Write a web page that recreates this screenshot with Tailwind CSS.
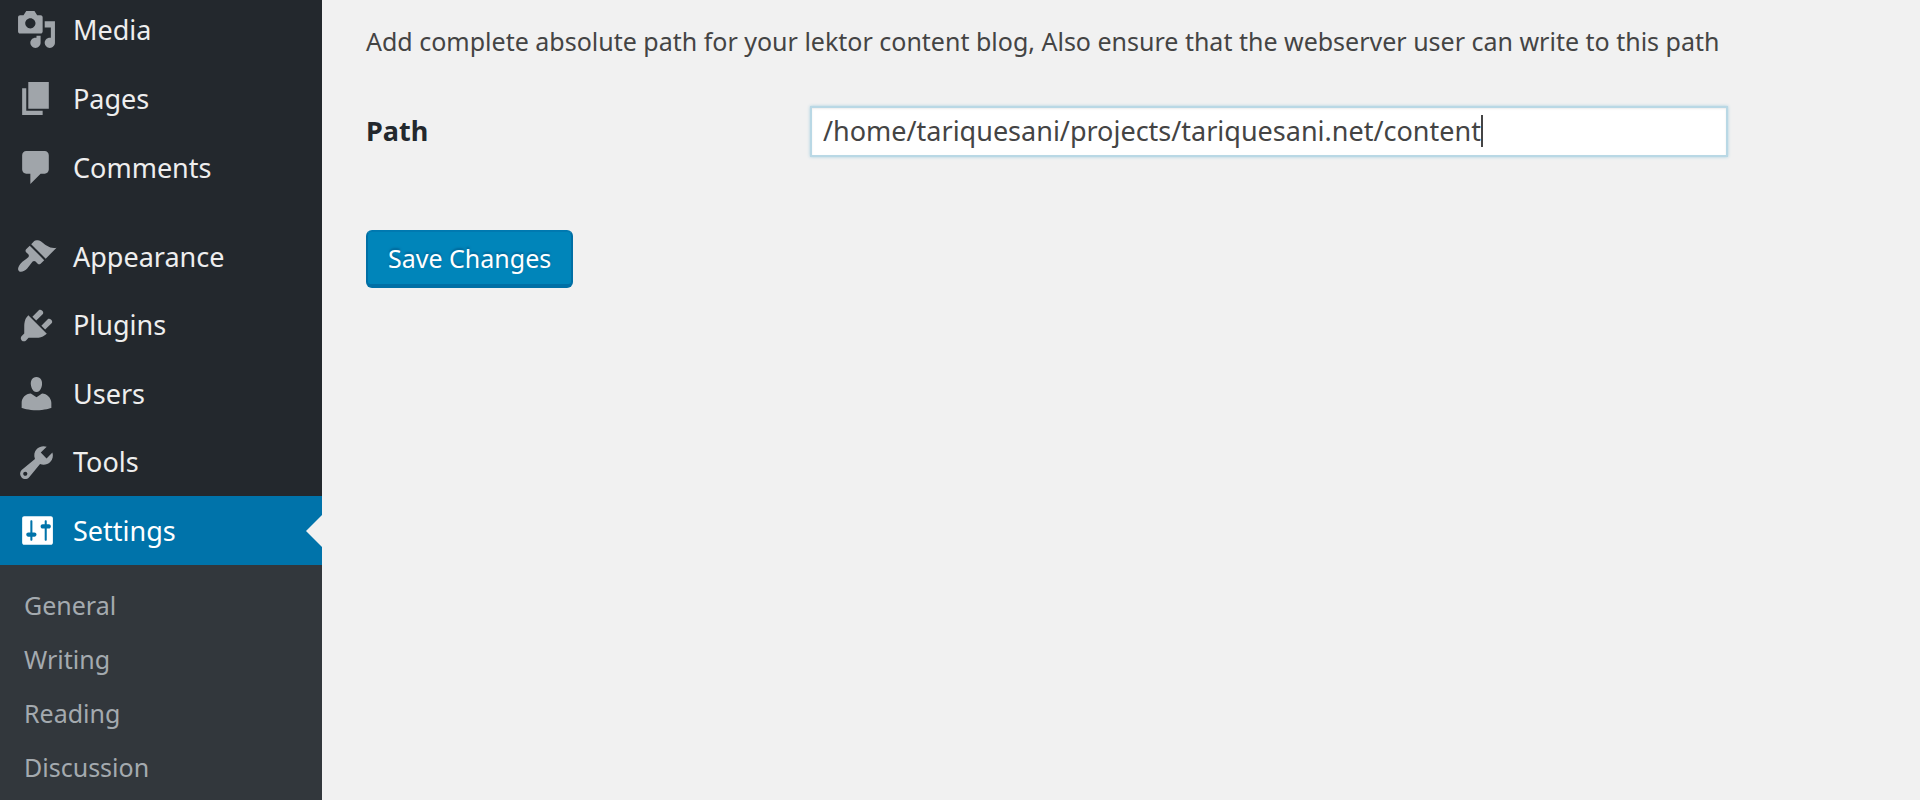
<!DOCTYPE html>
<html lang="en">
<head>
<meta charset="utf-8">
<title>Settings</title>
<script src="https://cdn.jsdelivr.net/npm/@tailwindcss/browser@4"></script>
</head>
<body class="bg-[#f1f1f1] font-['Noto_Sans',sans-serif] text-[#444]">
<div class="flex h-screen overflow-hidden">
  <nav aria-label="Main menu" class="w-[322px] shrink-0 overflow-hidden bg-[#23282d] text-[27px] leading-9 text-[#eee]">
    <ul class="-mt-[5px]">
      <li><a href="#" class="flex h-[69px] items-center gap-4 pl-4"><svg class="size-[41px] fill-[#a0a5aa]" viewBox="0 0 20 20" aria-hidden="true"><path d="M13 11V4c0-.55-.45-1-1-1h-1.67L9 1H5L3.670 3H2c-.55 0-1 .45-1 1v7c0 .55.45 1 1 1h10c.55 0 1-.45 1-1zM7 4.500c1.380 0 2.500 1.120 2.500 2.500S8.380 9.500 7 9.500 4.500 8.380 4.500 7 5.620 4.500 7 4.500zM14 6h5v10.500c0 1.380-1.120 2.500-2.500 2.500S14 17.880 14 16.500s1.120-2.500 2.500-2.500c.17 0 .34.02.5.05V9h-3V6zm-4 8.050V13h2v3.500c0 1.380-1.120 2.500-2.500 2.500S7 17.880 7 16.500 8.120 14 9.500 14c.17 0 .34.02.5.05z"/></svg>Media</a></li>
      <li><a href="#" class="flex h-[69px] items-center gap-4 pl-4"><svg class="size-[41px] fill-[#a0a5aa]" viewBox="0 0 20 20" aria-hidden="true"><path d="M6 15V2h10v13H6zm-1 1h8v2H3V5h2v11z"/></svg>Pages</a></li>
      <li><a href="#" class="flex h-[69px] items-center gap-4 pl-4"><svg class="size-[41px] fill-[#a0a5aa]" viewBox="0 0 20 20" aria-hidden="true"><path d="M5 2h9c1.100 0 2 .9 2 2v7c0 1.100-.9 2-2 2h-2l-5 5v-5H5c-1.100 0-2-.9-2-2V4c0-1.100.9-2 2-2z"/></svg>Comments</a></li>
      <li class="mt-5"><a href="#" class="flex h-[69px] items-center gap-4 pl-4"><svg class="size-[41px] fill-[#a0a5aa]" viewBox="0 0 20 20" aria-hidden="true"><path d="M14.480 11.060L7.410 3.990l1.500-1.500c.5-.56 2.300-.47 3.510.32 1.210.8 1.430 1.280 2.910 2.100 1.180.64 2.450 1.260 4.450.85zm-.71.71L6.700 4.700 4.930 6.470c-.39.39-.39 1.020 0 1.410l1.060 1.060c.39.39.39 1.030 0 1.420-.6.6-1.430 1.110-2.210 1.690-.35.26-.7.53-1.010.84C1.430 14.230.4 16.080 1.400 17.070c.99 1 2.840-.03 4.180-1.360.31-.31.58-.66.85-1.020.57-.78 1.080-1.610 1.690-2.210.39-.39 1.020-.39 1.410 0l1.060 1.060c.39.39 1.020.39 1.410 0z"/></svg>Appearance</a></li>
      <li><a href="#" class="flex h-[68px] items-center gap-4 pl-4"><svg class="size-[41px] fill-[#a0a5aa]" viewBox="0 0 20 20" aria-hidden="true"><path d="M13.110 4.360L9.870 7.600 8 5.730l3.240-3.240c.35-.34 1.050-.2 1.560.32.52.51.66 1.210.31 1.550zm-8 1.770l.91-1.120 9.010 9.010-1.190.84c-.71.71-2.630 1.160-3.820 1.160H6.140L4.900 17.260c-.59.59-1.540.59-2.120 0-.59-.58-.59-1.530 0-2.120l1.240-1.240v-3.880c0-1.130.4-3.190 1.090-3.890zm7.260 3.970l3.240-3.240c.34-.35 1.040-.21 1.550.31.52.51.66 1.210.31 1.550l-3.240 3.250z"/></svg>Plugins</a></li>
      <li><a href="#" class="flex h-[69px] items-center gap-4 pl-4"><svg class="size-[41px] fill-[#a0a5aa]" viewBox="0 0 20 20" aria-hidden="true"><path d="M10 9.250c-2.270 0-2.730-3.440-2.730-3.440C7 4.020 7.820 2 9.970 2c2.160 0 2.980 2.020 2.710 3.810 0 0-.41 3.440-2.680 3.440zm0 2.570L12.720 10c2.390 0 4.520 2.330 4.520 4.530v2.490s-3.650 1.130-7.240 1.130c-3.650 0-7.240-1.130-7.240-1.130v-2.490c0-2.250 1.940-4.480 4.470-4.480z"/></svg>Users</a></li>
      <li><a href="#" class="flex h-[68px] items-center gap-4 pl-4"><svg class="size-[41px] fill-[#a0a5aa]" viewBox="0 0 20 20" aria-hidden="true"><path d="M16.680 9.770c-1.340 1.340-3.300 1.670-4.950.99l-5.410 6.520c-.99.99-2.590.99-3.580 0s-.99-2.590 0-3.570l6.520-5.420c-.68-1.650-.35-3.610.99-4.950 1.280-1.280 3.120-1.620 4.720-1.060l-2.890 2.890 2.820 2.820 2.860-2.870c.53 1.580.18 3.390-1.080 4.650zM3.810 16.210c.4.39 1.040.39 1.430 0 .4-.4.4-1.040 0-1.430-.39-.4-1.030-.4-1.430 0-.39.39-.39 1.030 0 1.430z"/></svg>Tools</a></li>
      <li>
        <a href="#" aria-current="page" class="relative flex h-[69px] items-center gap-4 bg-[#0073aa] pl-4 text-white"><svg class="size-[41px] fill-white" viewBox="0 0 20 20" aria-hidden="true"><path d="M18 16V4c0-.55-.45-1-1-1H4c-.55 0-1 .45-1 1v12c0 .55.45 1 1 1h13c.55 0 1-.45 1-1zM8 11h1c.55 0 1 .45 1 1s-.45 1-1 1H8v1.500c0 .28-.22.5-.5.500s-.5-.22-.5-.5V13H6c-.55 0-1-.45-1-1s.45-1 1-1h1V5.500c0-.28.22-.5.5-.5s.5.22.5.500V11zm6-2h-1c-.55 0-1-.45-1-1s.45-1 1-1h1V5.500c0-.28.22-.5.5-.5s.5.22.5.500V7h1c.55 0 1 .45 1 1s-.45 1-1 1h-1v5.500c0 .28-.22.5-.5.500s-.5-.22-.5-.5V9z"/></svg>Settings<span class="absolute top-1/2 right-0 -translate-y-1/2 border-y-16 border-r-16 border-y-transparent border-r-[#f1f1f1]"></span></a>
        <ul class="bg-[#32373c] pt-[13px] pb-4 text-[25px] text-[#a4aaaf]">
          <li><a href="#" class="flex h-[54px] items-center pl-6">General</a></li>
          <li><a href="#" class="flex h-[54px] items-center pl-6">Writing</a></li>
          <li><a href="#" class="flex h-[54px] items-center pl-6">Reading</a></li>
          <li><a href="#" class="flex h-[54px] items-center pl-6">Discussion</a></li>
        </ul>
      </li>
    </ul>
  </nav>
  <main class="min-w-0 flex-1 pt-[23px] pl-[44px]">
    <form>
      <p class="text-[25px] leading-9">Add complete absolute path for your lektor content blog, Also ensure that the webserver user can write to this path</p>
      <div class="mt-[47px] flex items-center">
        <label for="path" class="w-[444px] shrink-0 pb-[2px] text-[27px] leading-9 font-bold text-[#23282d]">Path</label>
        <div class="flex h-[51px] w-[918px] items-center border-2 border-[#b9d8e5] bg-white pb-[2px] pl-[11px] shadow-[0_0_3px_#a8d0e0,inset_0_1px_2px_#00000014]">
          <input id="path" type="text" value="/home/tariquesani/projects/tariquesani.net/content" class="field-sizing-content max-w-full bg-transparent text-[27px] leading-9 text-[#444] caret-transparent outline-none">
          <span class="h-8 w-[2px] bg-[#444]"></span>
        </div>
      </div>
      <button type="submit" class="mt-[73px] h-[58px] rounded-md border-2 border-b-4 border-[#006fa5] border-t-[#0079b0] bg-[#0085ba] px-5 text-[25px] leading-9 text-white text-shadow-[0_-2px_2px_#006799]">Save Changes</button>
    </form>
  </main>
</div>
</body>
</html>
